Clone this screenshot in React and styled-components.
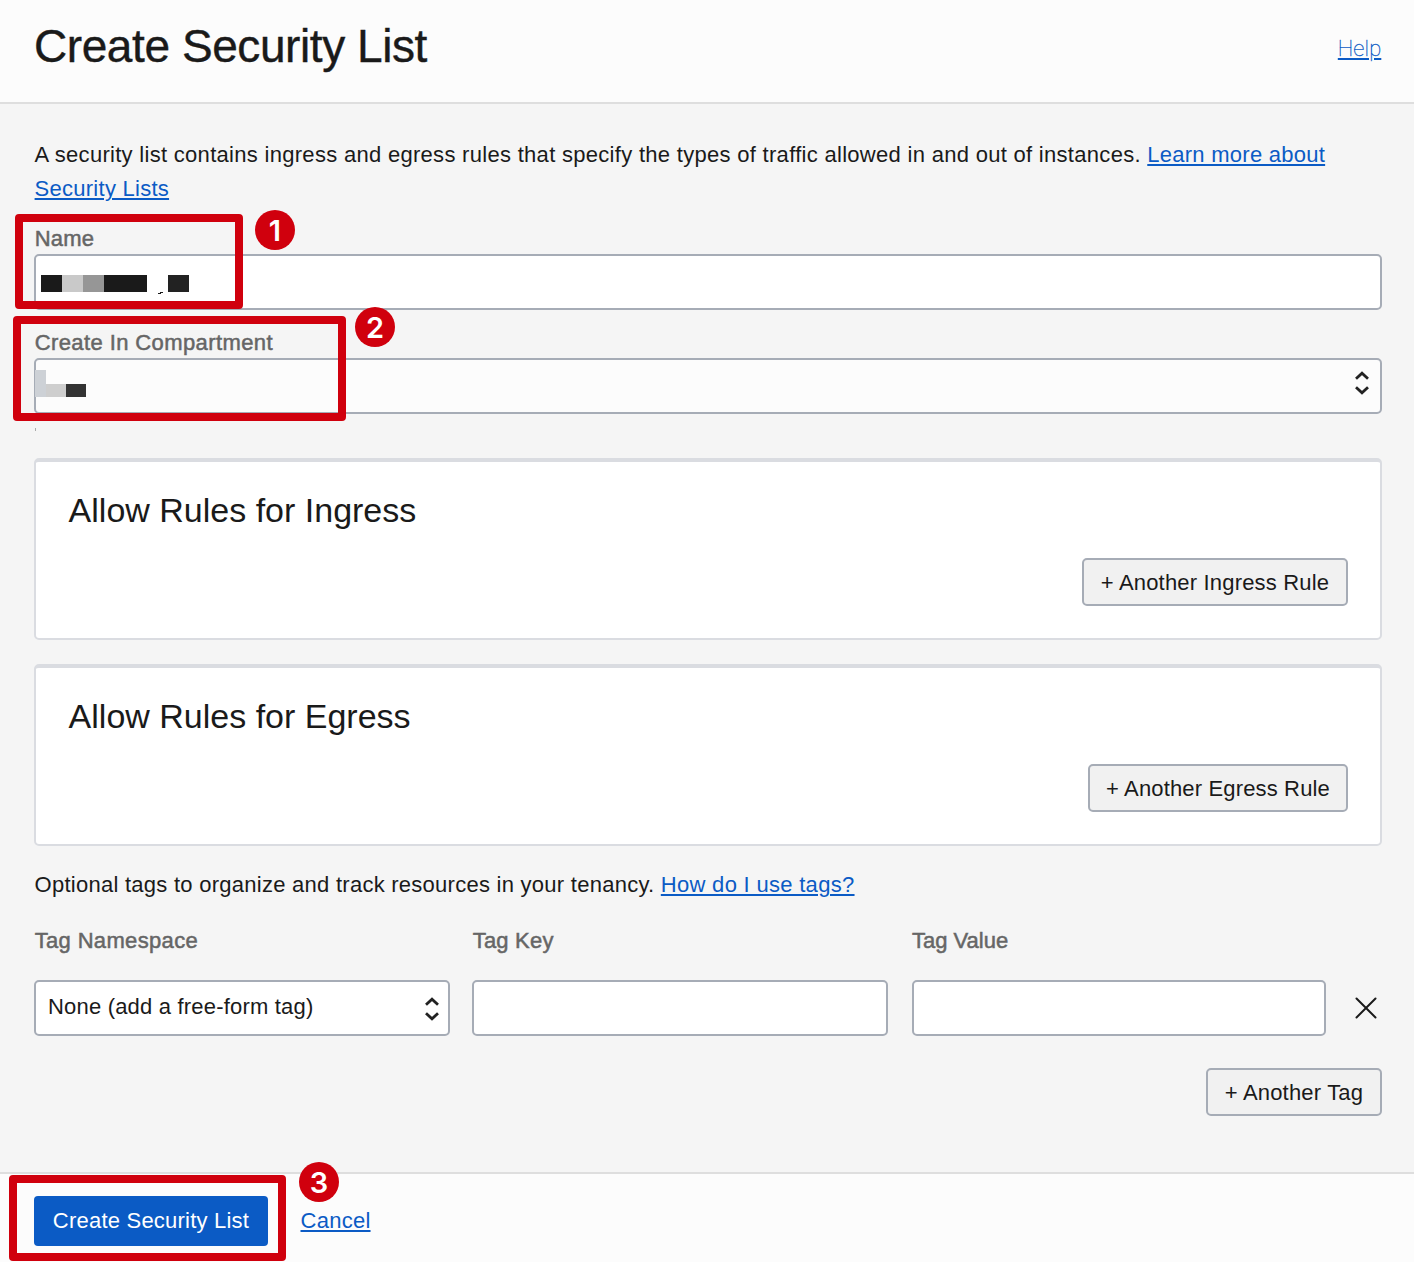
import React from "react";
import styled, { createGlobalStyle } from "styled-components";

const GlobalStyle = createGlobalStyle`
  *, *::before, *::after { box-sizing: border-box; }
  body {
    margin: 0;
    background: #f5f5f5;
    color: #1a1a1a;
    font-family: "Liberation Sans", Arial, sans-serif;
    font-size: 22px;
    line-height: 34px;
  }
`;

const Dialog = styled.div`
  position: relative;
  display: flex;
  flex-direction: column;
  width: 1414px;
  height: 1262px;
  overflow: hidden;
`;

const Header = styled.header`
  display: flex;
  justify-content: space-between;
  height: 104px;
  padding: 19px 32px 0 34px;
  background: #fcfcfc;
  border-bottom: 2px solid #dedede;
`;

const Title = styled.h1`
  margin: 0;
  font-size: 46px;
  font-weight: 400;
  line-height: 54px;
  letter-spacing: -0.42px;
  -webkit-text-stroke: 0.4px currentColor;
`;

const Link = styled.a`
  color: #0b5bc5;
  text-decoration: underline;
  text-decoration-thickness: 2px;
  text-underline-offset: 2px;
  letter-spacing: ${(p) => p.$spacing || "0.26px"};
`;

const HelpLink = styled(Link)`
  margin: 13px 0.7px 0 0;
  font-family: Roboto, sans-serif;
  font-weight: 100;
  -webkit-text-stroke: 0.3px currentColor;
`;

const Body = styled.main`
  display: flex;
  flex-direction: column;
  flex: 1;
  padding: 34px 32px 0 34px;
`;

const Text = styled.p`
  margin: 0;
  padding-left: 0.6px;
  letter-spacing: ${(p) => p.$spacing || "0.295px"};
`;

const Label = styled.label`
  padding-left: ${(p) => p.$indent || "0.7px"};
  color: #666;
  line-height: 30px;
  letter-spacing: ${(p) => p.$spacing || "0.4px"};
  -webkit-text-stroke: 0.5px currentColor;
`;

const Field = styled.div`
  display: flex;
  flex-direction: column;
  height: 104px;
  padding-top: 18px;
`;

const Control = styled.div`
  display: flex;
  align-items: center;
  flex: none;
  height: 56px;
  padding: 0 ${(p) => p.$end || "5px"} 0 ${(p) => p.$inset || "5px"};
  background: ${(p) => (p.$muted ? "#fcfcfc" : "#fff")};
  border: 2px solid #a6acb6;
  border-radius: 5px;
`;

const Value = styled.span`
  flex: 1;
  margin-top: -2px;
  letter-spacing: 0.19px;
`;

const Chevrons = styled.svg`
  width: 16px;
  height: 26px;
  margin: ${(p) => p.$offset || "0"} 0 0 auto;
  fill: none;
  stroke: #222;
  stroke-width: 2.8;
`;

const Redaction = styled.div`
  display: flex;
  align-items: flex-end;
  height: ${(p) => p.$height}px;
  margin-top: ${(p) => p.$top}px;
  margin-left: ${(p) => p.$left || 0}px;
`;

const Block = styled.span`
  width: ${(p) => p.$w}px;
  height: ${(p) => p.$h}px;
  background: ${(p) => p.$tone};
`;

const Speck = styled.svg`
  width: 5px;
  height: 2px;
  margin: 0 5px -2px 11px;
  fill: #1a1a1a;
`;

const Residue = styled.div`
  width: 1px;
  height: 3px;
  margin: 14px 0 0 1px;
  background: #aaa;
`;

const Rules = styled.section`
  display: flex;
  flex-direction: column;
  height: 182px;
  margin-bottom: 24px;
  padding: 28px 32px 32px;
  background: #fff;
  border: 2px solid #dadce1;
  border-top-width: 4px;
  border-radius: 5px;
`;

const RulesTitle = styled.h2`
  margin: 0;
  padding-left: 0.6px;
  font-size: 34px;
  font-weight: 400;
  line-height: 40px;
  letter-spacing: 0;
`;

const AddButton = styled.button`
  align-self: flex-end;
  flex: none;
  width: ${(p) => p.$w}px;
  height: 48px;
  margin-top: ${(p) => p.$top || "auto"};
  padding: 1px 0 0;
  color: #1a1a1a;
  background: #f1f1f1;
  border: 2px solid #a6acb6;
  border-radius: 5px;
  font: inherit;
  letter-spacing: ${(p) => p.$spacing || "0.18px"};
  white-space: nowrap;
`;

const Stack = styled.div`
  display: flex;
  flex-direction: column;
  margin-top: 27px;
`;

const TagsText = styled(Text)`
  margin-top: -2px;
`;

const TagGrid = styled.div`
  display: grid;
  grid-template-columns: 416px 416px 414px 1fr;
  column-gap: 22px;
  margin-top: 24px;

  & > :nth-child(3) { margin-left: 2px; margin-right: -2px; }
`;

const TagField = styled.div`
  display: flex;
  flex-direction: column;
  gap: 24px;
`;

const Close = styled.svg`
  width: 22px;
  height: 22px;
  margin: 71px 0 0 9px;
  stroke: #1a1a1a;
  stroke-width: 2;
  stroke-linecap: round;
`;

const Footer = styled.footer`
  display: flex;
  align-items: flex-start;
  gap: 33px;
  height: 90px;
  padding: 22px 34px 0;
  background: #fcfcfc;
  border-top: 2px solid #dedede;
`;

const Submit = styled.button`
  width: 234px;
  height: 50px;
  padding: 0;
  color: #fff;
  background: #0b5bc5;
  border: 0;
  border-radius: 4px;
  font: inherit;
  letter-spacing: 0.22px;
`;

const Cancel = styled(Link)`
  margin: 8px 0 0 -0.5px;
`;

const Highlight = styled.div`
  position: absolute;
  left: ${(p) => p.$x}px;
  top: ${(p) => p.$y}px;
  width: ${(p) => p.$w}px;
  height: ${(p) => p.$h}px;
  border: 8px solid #d0000d;
  border-radius: 4px;
`;

const Step = styled.div`
  position: absolute;
  left: ${(p) => p.$x}px;
  top: ${(p) => p.$y}px;
  width: 40px;
  height: 40px;
  color: #fff;
  background: #d0000d;
  border-radius: 50%;
  font: 600 29px/41px Inter, sans-serif;
  text-align: center;
`;

function UpDown({ offset }) {
  return (
    <Chevrons viewBox="0 0 16 26" $offset={offset}>
      <path d="M2 8.7 8 3.2 14 8.7M2 17.3 8 22.8 14 17.3" />
    </Chevrons>
  );
}

export default function App() {
  return (
    <Dialog>
      <GlobalStyle />
      <Header>
        <Title>Create Security List</Title>
        <HelpLink $spacing="0.1px">Help</HelpLink>
      </Header>
      <Body>
        <Text>
          A security list contains ingress and egress rules that specify the types of traffic allowed in and out of
          instances. <Link>Learn more about</Link> <Link>Security Lists</Link>
        </Text>
        <Field>
          <Label $spacing="0.2px">Name</Label>
          <Control>
            <Redaction $height={17} $top={3}>
              <Block $w={21} $h={17} $tone="#1a1a1a" />
              <Block $w={21} $h={17} $tone="#c9c9c9" />
              <Block $w={21} $h={17} $tone="#969696" />
              <Block $w={43} $h={17} $tone="#1a1a1a" />
              <Speck viewBox="0 0 5 2">
                <path d="M0 1h2V0h3v1H3v1H0z" />
              </Speck>
              <Block $w={21} $h={17} $tone="#222" />
            </Redaction>
          </Control>
        </Field>
        <Field>
          <Label>Create In Compartment</Label>
          <Control $muted $end="10px" $inset="0">
            <Redaction $height={27} $top={-5} $left={-1}>
              <Block $w={11} $h={27} $tone="#cdd1d6" />
              <Block $w={20} $h={13} $tone="#cecece" />
              <Block $w={20} $h={13} $tone="#333" />
            </Redaction>
            <UpDown offset="-6px" />
          </Control>
        </Field>
        <Residue />
        <Stack>
          <Rules>
            <RulesTitle>Allow Rules for Ingress</RulesTitle>
            <AddButton $w={266}>+ Another Ingress Rule</AddButton>
          </Rules>
          <Rules>
            <RulesTitle>Allow Rules for Egress</RulesTitle>
            <AddButton $w={260} $spacing="0.15px">+ Another Egress Rule</AddButton>
          </Rules>
        </Stack>
        <TagsText $spacing="0.26px">
          Optional tags to organize and track resources in your tenancy. <Link $spacing="0.3px">How do I use tags?</Link>
        </TagsText>
        <TagGrid>
          <TagField>
            <Label $spacing="0.34px">Tag Namespace</Label>
            <Control $end="8px" $inset="12px">
              <Value>None (add a free-form tag)</Value>
              <UpDown offset="2px" />
            </Control>
          </TagField>
          <TagField>
            <Label $spacing="0.2px">Tag Key</Label>
            <Control />
          </TagField>
          <TagField>
            <Label $spacing="0px" $indent="0">Tag Value</Label>
            <Control />
          </TagField>
          <Close viewBox="0 0 22 22">
            <path d="M1.5 1.5 20.5 20.5M20.5 1.5 1.5 20.5" />
          </Close>
        </TagGrid>
        <AddButton $w={176} $top="32px">+ Another Tag</AddButton>
      </Body>
      <Footer>
        <Submit>Create Security List</Submit>
        <Cancel>Cancel</Cancel>
      </Footer>
      <Highlight $x={15} $y={214} $w={228} $h={95} />
      <Highlight $x={13} $y={316} $w={333} $h={105} />
      <Highlight $x={9} $y={1175} $w={277} $h={86} />
      <Step $x={255} $y={210}>1</Step>
      <Step $x={355} $y={307}>2</Step>
      <Step $x={299} $y={1162}>3</Step>
    </Dialog>
  );
}
